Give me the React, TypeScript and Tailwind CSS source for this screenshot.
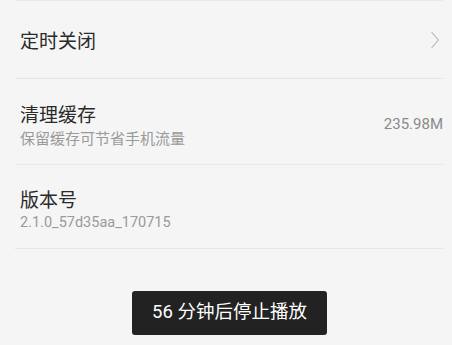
import React from 'react';

const font = { fontFamily: 'Roboto, "Noto Sans CJK SC", sans-serif' };

function Row({ children, className = '' }: { children: React.ReactNode; className?: string }) {
  return (
    <div className={`flex items-center justify-between border-b border-[#e6e6e6] pl-[5px] ${className}`}>
      {children}
    </div>
  );
}

export default function App() {
  return (
    <div className="w-[452px] h-[345px] overflow-hidden bg-[#f5f5f5]" style={font}>
      <div className="pl-[15px] pr-[9px]">
        <div className="border-t border-[#e8e8e8]" />
        <Row className="h-[78px] pt-[4px]">
          <span className="text-[19px] leading-[24px] text-[#2a2a2a]">定时关闭</span>
          <svg width="10" height="18" viewBox="0 0 10 18" className="mr-[3px] mb-[4px]">
            <path d="M1.5 1 L8.5 9 L1.5 17" fill="none" stroke="#c4c4c4" strokeWidth="1.2" />
          </svg>
        </Row>
        <Row className="h-[86px] pt-[10px]">
          <div className="flex flex-col">
            <span className="text-[19px] leading-[24px] text-[#2a2a2a]">清理缓存</span>
            <span className="text-[15px] leading-[20px] text-[#9a9a9a] mt-[1px]">保留缓存可节省手机流量</span>
          </div>
          <span className="text-[15px] text-[#8a8a8a] mb-[4px]">235.98M</span>
        </Row>
        <Row className="h-[84px] pt-[8px]">
          <div className="flex flex-col">
            <span className="text-[19px] leading-[24px] text-[#2a2a2a]">版本号</span>
            <span className="text-[14.5px] leading-[20px] text-[#9a9a9a]">2.1.0_57d35aa_170715</span>
          </div>
        </Row>
      </div>
      <div className="mt-[42px] flex justify-center pl-[7px]">
        <div className="h-[44px] px-[20px] flex items-center rounded-[3px] bg-[#222222] text-white text-[18.5px]">
          56 分钟后停止播放
        </div>
      </div>
    </div>
  );
}
